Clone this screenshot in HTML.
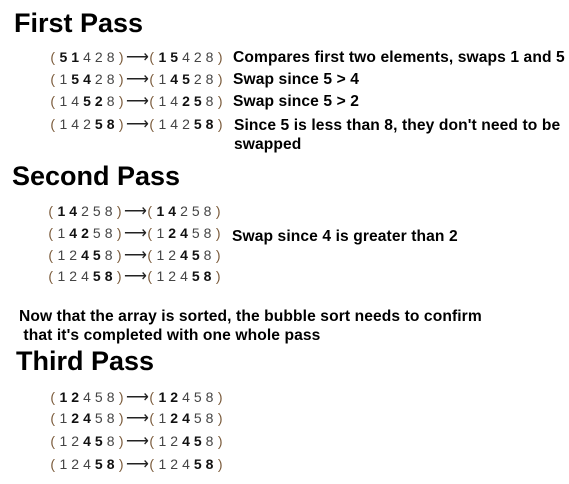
<!DOCTYPE html>
<html><head><style>
body{margin:0;width:569px;height:484px;background:#fff;position:relative;font-family:"Liberation Sans",Arial,sans-serif;overflow:hidden}
.t{position:absolute;font-weight:bold;font-size:27px;color:#000;line-height:1}
.f{position:absolute;display:flex;align-items:center;height:16px;font-size:14px;color:#444}
.f span{display:inline-block;width:11.8px;text-align:center}
.f .p{width:9.5px;color:#7a5a3a}
.f .a{width:21px;font-size:16px;color:#222}
.f b{display:inline-block;width:11.8px;text-align:center;color:#111}
.e{position:absolute;font-weight:bold;font-size:15.6px;color:#000;line-height:19px;letter-spacing:0.1px}
</style></head><body>
<div class="t" style="left:14px;top:10px">First Pass</div>
<div class="t" style="left:12px;top:163px">Second Pass</div>
<div class="t" style="left:16px;top:348px">Third Pass</div>

<div class="f" style="left:48px;top:49px"><span class="p">(</span><b>5</b><b>1</b><span>4</span><span>2</span><span>8</span><span class="p">)</span><span class="a">⟶</span><span class="p">(</span><b>1</b><b>5</b><span>4</span><span>2</span><span>8</span><span class="p">)</span></div>
<div class="f" style="left:48px;top:71px"><span class="p">(</span><span>1</span><b>5</b><b>4</b><span>2</span><span>8</span><span class="p">)</span><span class="a">⟶</span><span class="p">(</span><span>1</span><b>4</b><b>5</b><span>2</span><span>8</span><span class="p">)</span></div>
<div class="f" style="left:48px;top:93px"><span class="p">(</span><span>1</span><span>4</span><b>5</b><b>2</b><span>8</span><span class="p">)</span><span class="a">⟶</span><span class="p">(</span><span>1</span><span>4</span><b>2</b><b>5</b><span>8</span><span class="p">)</span></div>
<div class="f" style="left:48px;top:116px"><span class="p">(</span><span>1</span><span>4</span><span>2</span><b>5</b><b>8</b><span class="p">)</span><span class="a">⟶</span><span class="p">(</span><span>1</span><span>4</span><span>2</span><b>5</b><b>8</b><span class="p">)</span></div>

<div class="e" style="left:233px;top:48px">Compares first two elements, swaps 1 and 5</div>
<div class="e" style="left:233px;top:70px">Swap since 5 &gt; 4</div>
<div class="e" style="left:233px;top:92px">Swap since 5 &gt; 2</div>
<div class="e" style="left:234px;top:116px">Since 5 is less than 8, they don't need to be<br>swapped</div>

<div class="f" style="left:46px;top:203px"><span class="p">(</span><b>1</b><b>4</b><span>2</span><span>5</span><span>8</span><span class="p">)</span><span class="a">⟶</span><span class="p">(</span><b>1</b><b>4</b><span>2</span><span>5</span><span>8</span><span class="p">)</span></div>
<div class="f" style="left:46px;top:225px"><span class="p">(</span><span>1</span><b>4</b><b>2</b><span>5</span><span>8</span><span class="p">)</span><span class="a">⟶</span><span class="p">(</span><span>1</span><b>2</b><b>4</b><span>5</span><span>8</span><span class="p">)</span></div>
<div class="f" style="left:46px;top:247px"><span class="p">(</span><span>1</span><span>2</span><b>4</b><b>5</b><span>8</span><span class="p">)</span><span class="a">⟶</span><span class="p">(</span><span>1</span><span>2</span><b>4</b><b>5</b><span>8</span><span class="p">)</span></div>
<div class="f" style="left:46px;top:268px"><span class="p">(</span><span>1</span><span>2</span><span>4</span><b>5</b><b>8</b><span class="p">)</span><span class="a">⟶</span><span class="p">(</span><span>1</span><span>2</span><span>4</span><b>5</b><b>8</b><span class="p">)</span></div>
<div class="e" style="left:232px;top:227px">Swap since 4 is greater than 2</div>

<div class="e" style="left:19px;top:307px">Now that the array is sorted, the bubble sort needs to confirm<br>&nbsp;that it's completed with one whole pass</div>

<div class="f" style="left:48px;top:389px"><span class="p">(</span><b>1</b><b>2</b><span>4</span><span>5</span><span>8</span><span class="p">)</span><span class="a">⟶</span><span class="p">(</span><b>1</b><b>2</b><span>4</span><span>5</span><span>8</span><span class="p">)</span></div>
<div class="f" style="left:48px;top:410px"><span class="p">(</span><span>1</span><b>2</b><b>4</b><span>5</span><span>8</span><span class="p">)</span><span class="a">⟶</span><span class="p">(</span><span>1</span><b>2</b><b>4</b><span>5</span><span>8</span><span class="p">)</span></div>
<div class="f" style="left:48px;top:433px"><span class="p">(</span><span>1</span><span>2</span><b>4</b><b>5</b><span>8</span><span class="p">)</span><span class="a">⟶</span><span class="p">(</span><span>1</span><span>2</span><b>4</b><b>5</b><span>8</span><span class="p">)</span></div>
<div class="f" style="left:48px;top:456px"><span class="p">(</span><span>1</span><span>2</span><span>4</span><b>5</b><b>8</b><span class="p">)</span><span class="a">⟶</span><span class="p">(</span><span>1</span><span>2</span><span>4</span><b>5</b><b>8</b><span class="p">)</span></div>
</body></html>
